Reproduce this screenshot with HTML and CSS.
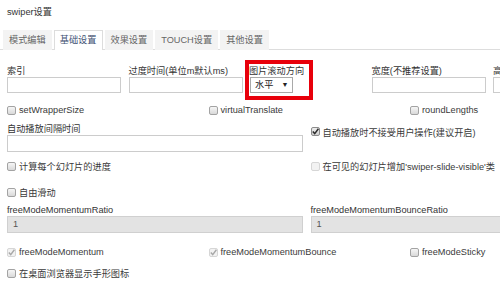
FILE: index.html
```html
<!DOCTYPE html>
<html lang="zh-CN">
<head>
<meta charset="utf-8">
<title>swiper设置</title>
<link rel="stylesheet" href="styles.css">
</head>
<body>
<div class="page">
  <div class="title">swiper设置</div>
  <ul class="tabs">
    <li class="tab">模式编辑</li>
    <li class="tab active">基础设置</li>
    <li class="tab">效果设置</li>
    <li class="tab">TOUCH设置</li>
    <li class="tab">其他设置</li>
  </ul>

  <div class="pane">
    <div class="row cols5">
      <div class="field"><div class="label">索引</div><div class="input"></div></div>
      <div class="field"><div class="label">过度时间(单位m默认ms)</div><div class="input"></div></div>
      <div class="field hl"><div class="label">图片滚动方向</div><div class="sel">水平<span class="caret">▼</span></div></div>
      <div class="field"><div class="label">宽度(不推荐设置)</div><div class="input"></div></div>
      <div class="field"><div class="label">高度(不推荐设置)</div><div class="input"></div></div>
    </div>

    <div class="row cols3 rowA">
      <div class="check"><span class="cb"></span>setWrapperSize</div>
      <div class="check"><span class="cb"></span>virtualTranslate</div>
      <div class="check"><span class="cb"></span>roundLengths</div>
    </div>

    <div class="row cols2 rowB">
      <div class="field wide"><div class="label">自动播放间隔时间</div><div class="input tall"></div></div>
      <div class="check top"><span class="cb on"><svg viewBox="0 0 9 9" width="9" height="9"><path d="M1.8 4.6 L3.7 6.6 L7.4 1.8" fill="none" stroke="#2b2b2b" stroke-width="1.5"/></svg></span>自动播放时不接受用户操作(建议开启)</div>
    </div>

    <div class="row cols2 rowC">
      <div class="check"><span class="cb"></span>计算每个幻灯片的进度</div>
      <div class="check"><span class="cb dis"></span>在可见的幻灯片增加'swiper-slide-visible'类</div>
    </div>

    <div class="row rowD">
      <div class="check"><span class="cb"></span>自由滑动</div>
    </div>

    <div class="row cols2 rowR">
      <div class="field wide"><div class="label">freeModeMomentumRatio</div><div class="input tall disabled">1</div></div>
      <div class="field wide"><div class="label">freeModeMomentumBounceRatio</div><div class="input tall disabled">1</div></div>
    </div>

    <div class="row cols3 rowE">
      <div class="check"><span class="cb dis"><svg viewBox="0 0 9 9" width="9" height="9"><path d="M1.8 4.6 L3.7 6.6 L7.4 1.8" fill="none" stroke="#a8a8a8" stroke-width="1.4"/></svg></span>freeModeMomentum</div>
      <div class="check"><span class="cb dis"><svg viewBox="0 0 9 9" width="9" height="9"><path d="M1.8 4.6 L3.7 6.6 L7.4 1.8" fill="none" stroke="#a8a8a8" stroke-width="1.4"/></svg></span>freeModeMomentumBounce</div>
      <div class="check"><span class="cb"></span>freeModeSticky</div>
    </div>

    <div class="row rowF">
      <div class="check"><span class="cb"></span>在桌面浏览器显示手形图标</div>
    </div>
  </div>
</div>
</body>
</html>
```

FILE: styles.css
```css
html, body {
  margin: 0;
  padding: 0;
  background: #fff;
  overflow: hidden;
}

body {
  font-family: "Liberation Sans", "Noto Sans CJK SC", sans-serif;
  font-size: 9.2px;
  color: #333;
}

.page {
  width: 620px;
}

.title {
  margin: 6px 0 0 7px;
  line-height: 13px;
  color: #333;
}

.tabs {
  list-style: none;
  margin: 11px 0 0 0;
  padding: 0 0 0 3px;
  display: flex;
  border-bottom: 1px solid #ddd;
  height: 19px;
}

.tab {
  box-sizing: border-box;
  height: 20px;
  line-height: 19px;
  padding: 0 5px;
  margin-right: 2px;
  background: #f3f3f3;
  border: 1px solid transparent;
  border-bottom: none;
  color: #666;
  white-space: nowrap;
}

.tab.active {
  background: #fff;
  border-color: #ddd;
  color: #3f5273;
}

.pane {
  padding-left: 7px;
}

.row {
  display: grid;
}

.cols5 {
  grid-template-columns: repeat(5, 114px);
  column-gap: 7.5px;
  margin-top: 14px;
}

.cols3 {
  grid-template-columns: repeat(3, 201.5px);
}

.cols2 {
  grid-template-columns: 296px 296px;
  column-gap: 7.5px;
}

.field {
  padding-bottom: 3px;
}

.label {
  height: 13px;
  line-height: 15px;
  white-space: nowrap;
  color: #333;
}

.input {
  box-sizing: border-box;
  height: 16px;
  border: 1px solid #ccc;
  background: #fff;
  line-height: 14px;
  padding-left: 5px;
  color: #555;
}

.input.tall {
  height: 17px;
  line-height: 15px;
}

.input.disabled {
  background: #e3e3e3;
  border-color: #d0d0d0;
}

.field.hl {
  width: 60px;
  margin-left: -1px;
  box-shadow: 0 0 0 4px #e8000b;
}

.sel {
  box-sizing: border-box;
  width: 43px;
  height: 16px;
  margin-left: 1px;
  border: 1px solid #a9a9a9;
  background: #fff;
  line-height: 14px;
  padding-left: 4px;
  color: #222;
  display: flex;
  align-items: center;
}

.caret {
  font-size: 7px;
  margin-left: 8px;
  color: #222;
}

.check {
  display: flex;
  align-items: center;
  height: 14px;
  white-space: nowrap;
  color: #3a3a3a;
}

.cb {
  box-sizing: border-box;
  width: 9px;
  height: 9px;
  flex: none;
  margin-right: 3px;
  border: 1px solid #a3a3a3;
  border-radius: 2px;
  background: linear-gradient(#f6f6f6, #d9d9d9);
  position: relative;
}

.cb svg {
  position: absolute;
  left: -1px;
  top: -1px;
}

.cb.on {
  border-color: #8c8c8c;
  background: linear-gradient(#eeeeee, #cfcfcf);
}

.cb.dis {
  border-color: #d6d6d6;
  background: #f2f2f2;
}

.rowA { margin-top: 7px; }

.rowB { margin-top: 5px; }
.rowB .check.top { margin-top: 2.5px; }
.rowB .field { padding-bottom: 0; }

.rowC { margin-top: 7px; }
.rowD { margin-top: 12px; }

.rowR { margin-top: 4px; }
.rowR .field { padding-bottom: 0; }

.rowE { margin-top: 12px; }
.rowF { margin-top: 7px; }
```
